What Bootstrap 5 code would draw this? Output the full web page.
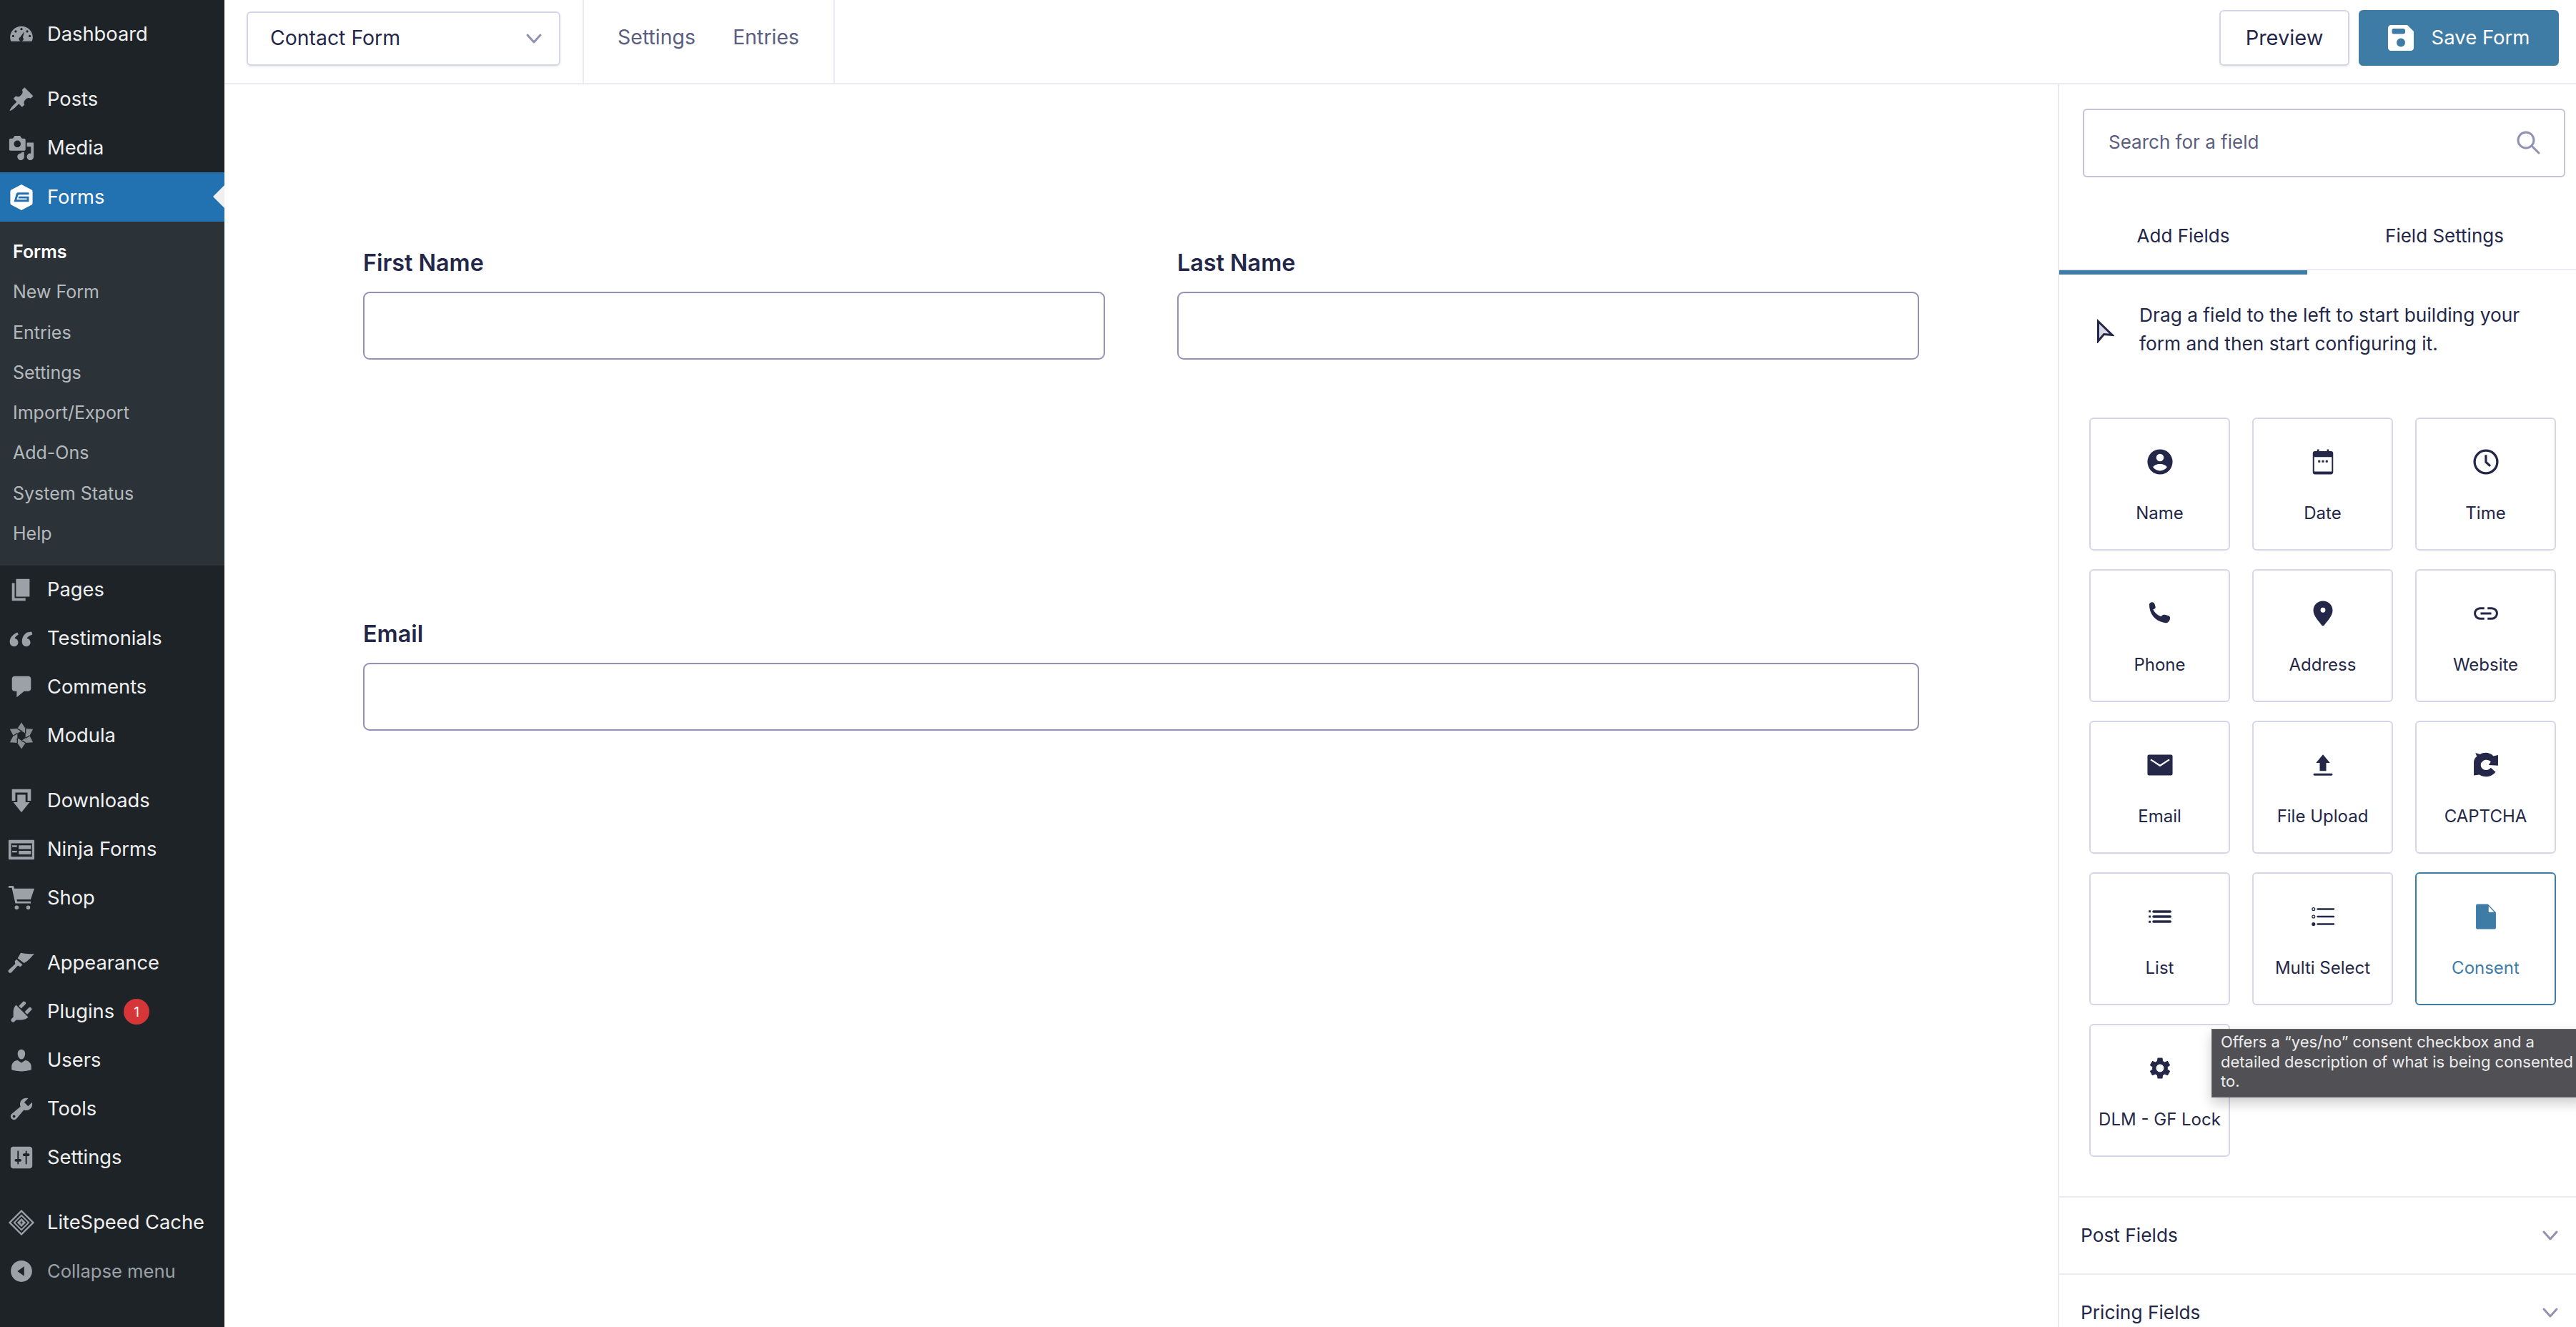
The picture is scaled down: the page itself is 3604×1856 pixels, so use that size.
<!DOCTYPE html>
<html lang="en">
<head>
<meta charset="utf-8">
<title>Contact Form</title>
<link href="https://cdn.jsdelivr.net/npm/bootstrap@5.3.0/dist/css/bootstrap.min.css" rel="stylesheet">
<style>
html,body{height:100%;margin:0;overflow:hidden;background:#fff;font-family:Inter,"Liberation Sans",sans-serif;color:#242748}
.app{height:1856px;width:3604px;position:relative}
.side{width:314px;flex:0 0 314px;background:#1d2327;padding-top:14px;height:100%}
.mitem{height:68px;color:#f0f0f1;font-size:27.3px;line-height:1;text-decoration:none;position:relative}
.mitem:hover{color:#f0f0f1}
.mico{width:60px;flex:0 0 60px;margin-right:6px;display:flex;justify-content:center}
.mico svg{width:38px;height:38px;fill:#9ca1a7}
.gapt{margin-top:23px}
.mitem.on{background:#2271b1;color:#fff;height:69px}
.mitem.on svg{fill:#fff}
.mitem.on::after{content:"";position:absolute;right:0;top:18px;border:16px solid transparent;border-right-color:#f0f0f1;border-left-width:0}
.sub{background:#2c3338;padding:14px 0 16px;height:481px}
.sitem{display:block;height:56.3px;line-height:56px;padding-left:18px;font-size:25px;color:#b4b9be;text-decoration:none}
.sitem.cur{color:#fff;font-weight:600}
.pill{width:36px;height:36px;background:#d63638;color:#fff;border-radius:50%;font-size:19px;display:flex;align-items:center;justify-content:center;margin-left:13px}
.dim{color:#9ca1a7;font-size:25.6px}
.dim svg{fill:#9ca1a7}
.sepz{stroke:#1d2327;stroke-width:.7}
.mainc{min-width:0;height:100%}
.topb{height:118px;flex:0 0 118px;border-bottom:2px solid #ebebf5;padding-top:14px}
.selbox{width:439px;height:76px;margin:2px 31px 0;border:2px solid #d5d7e9;border-radius:6px;padding:0 23px 1px 31px;font-size:28.4px;box-shadow:0 2px 3px rgba(36,39,72,.08)}
.chev{width:24px;height:16px;fill:none;stroke:#9092b2;stroke-width:3;stroke-linecap:round;stroke-linejoin:round}
.tlinks{width:353px;border-left:2px solid #ebebf5;border-right:2px solid #ebebf5;height:116px;margin-top:-14px;padding:0 0 11px 47px;gap:52px}
.tlink{font-size:28.5px;color:#5b5e80;text-decoration:none}
.btnp,.btns{height:78px;border-radius:6px;padding:0;display:flex;align-items:center;justify-content:center}
.btnp{width:182px;font-size:29px;background:#fff;border:2px solid #d5d7e9;color:#242748;box-shadow:0 2px 3px rgba(36,39,72,.08)}
.btns{width:280px;font-size:27.5px;background:#3e7ca6;border:0;color:#fff;gap:25px;margin:0 24px 0 13px}
.btns svg{width:36px;height:36px;fill:#fff}
.workz{min-height:0}
.canvasz{padding:230px 194px 0;min-width:0}
.lbl{font-size:32.3px;font-weight:600;line-height:40px;margin-bottom:20px;color:#242748}
.inp.form-control{height:95px;border:2px solid #9392b4;border-radius:9px;background:#fff;box-shadow:inset 0 1px 2px rgba(36,39,72,.04)}
.frow{gap:101px;margin-bottom:364px}
.frow>div{flex:1 1 0}
.panel{width:725px;flex:0 0 725px;border-left:2px solid #ebebf5;position:relative;overflow:hidden}
.srch{height:96px;margin:34px 15px 0 33px;border:2px solid #c2c3da;border-radius:6px;padding:0 32px 3px 34px;font-size:26px;color:#5b5e80}
.srch svg{width:36px;height:36px;fill:none;stroke:#9092b2;stroke-width:3;stroke-linecap:round}
.ftabs{margin-top:38px;height:92px;border-bottom:2px solid #ebebf5}
.ftab{height:92px;font-size:26px;color:#242748;line-height:88px;text-align:center;text-decoration:none}
.ftab:hover{color:#242748}
.ftab.a{flex:0 0 347px;box-shadow:0 6px 0 #3e7ca6}
.ftab.b{flex:1 1 0;padding-left:8px}
.hintz{padding:43px 0 0 53px;height:123px;font-size:26.3px;line-height:40px}
.hintz svg{flex:0 0 24px;width:24px;height:34px;margin-right:35px;margin-top:25px;fill:#d8d8e4;stroke:#242748;stroke-width:3}
.fgrid{display:grid;grid-template-columns:repeat(3,197px);column-gap:31px;row-gap:26px;margin:83px 0 0 42px}
.fcard{height:186px;border:2px solid #d5d7e9;border-radius:6px;font-size:24px;background:#fff;color:#242748;text-align:center;padding-top:42px}
.fcard svg{display:block;width:36px;height:36px;margin:0 auto 37px;fill:#242748}
.fcard span{display:block;line-height:34px;white-space:nowrap}
.fcard.sel{border-color:#3e7ca6;color:#3e7ca6}
.fcard.sel svg{fill:#3e7ca6}
.accs{border-top:2px solid #ebebf5;height:108px;padding:0 24px 0 30px;font-size:26.3px;color:#242748}
.acc1{margin-top:55px}
.tip{position:absolute;left:213px;top:1321px;width:520px;height:96px;background:#505055;color:#ececec;font-size:22px;line-height:27.5px;padding:4px 12px;white-space:nowrap;border:1px solid #666;box-shadow:0 8px 16px rgba(0,0,0,.2);z-index:5}
.fade{position:absolute;left:314px;right:0;bottom:0;height:57px;background:linear-gradient(rgba(236,236,236,0),rgba(236,236,236,1));pointer-events:none;z-index:6}
</style>
</head>
<body>
<div class="app d-flex">
<nav class="side">
<a class="mitem d-flex align-items-center" href="#"><span class="mico"><svg viewBox="0 0 20 20"><path transform="translate(1.500 1.500) scale(.85)" fill-rule="evenodd" d="M10 3C4.500 3 .2 7.200.2 12.500c0 1.300.3 2.600.7 3.500h18.200c.4-.9.7-2.200.7-3.500C19.800 7.200 15.500 3 10 3zM10 4.500a1 1 0 110 2 1 1 0 010-2zM5 6.500a1 1 0 110 2 1 1 0 010-2zM15 6.500a1 1 0 110 2 1 1 0 010-2zM2.800 10.500a1 1 0 110 2 1 1 0 010-2zM17.200 10.500a1 1 0 110 2 1 1 0 010-2zM12.500 7.500l-1.300 5.300a1.900 1.900 0 11-2.300-.4z"/></svg></span>Dashboard</a>
<a class="mitem d-flex align-items-center gapt" href="#"><span class="mico"><svg viewBox="0 0 20 20"><path d="M10.440 3.020l1.820-1.820 6.360 6.350-1.830 1.820c-1.050-.68-2.480-.57-3.410.36l-.75.75c-.92.93-1.040 2.350-.35 3.410l-1.830 1.820-2.410-2.410-2.800 2.790c-.42.42-3.380 2.710-3.800 2.290s1.860-3.390 2.280-3.810l2.790-2.790L4.100 9.360l1.830-1.820c1.050.69 2.480.57 3.400-.36l.75-.75c.93-.92 1.050-2.350.36-3.410z"/></svg></span>Posts</a>
<a class="mitem d-flex align-items-center" href="#"><span class="mico"><svg viewBox="0 0 20 20"><path d="M13 11V4c0-.55-.45-1-1-1h-1.670L9 1H5L3.670 3H2c-.55 0-1 .45-1 1v7c0 .55.45 1 1 1h10c.55 0 1-.45 1-1zM7 4.500c1.380 0 2.500 1.120 2.500 2.500S8.380 9.500 7 9.500 4.500 8.380 4.500 7 5.620 4.500 7 4.500zM14 6h5v10.500c0 1.380-1.120 2.500-2.500 2.500S14 17.880 14 16.500s1.120-2.500 2.500-2.500c.17 0 .34.02.5.05V9h-3V6zm-4 8.050V13h2v3.500c0 1.380-1.120 2.500-2.500 2.500S7 17.880 7 16.500 8.120 14 9.500 14c.17 0 .34.02.5.05z"/></svg></span>Media</a>
<a class="mitem on d-flex align-items-center" href="#"><span class="mico"><svg viewBox="0 0 20 20"><path fill-rule="evenodd" d="M10 .5L17.500 4.500Q18.200 5 18.200 5.800V14.200Q18.200 15 17.500 15.500L10 19.500 2.500 15.500Q1.800 15 1.800 14.200V5.800Q1.800 5 2.500 4.500zM7.500 6.500H15.500V8H8.500C8 8 7.700 8.200 7.500 8.600L6.500 11.700H14V10.800H7.700L8 9.300H15.500V13.300H4.500L6 8C6.300 7 6.800 6.500 7.500 6.500z"/></svg></span>Forms</a>
<div class="sub">
<a class="sitem cur" href="#">Forms</a>
<a class="sitem" href="#">New Form</a>
<a class="sitem" href="#">Entries</a>
<a class="sitem" href="#">Settings</a>
<a class="sitem" href="#">Import/Export</a>
<a class="sitem" href="#">Add-Ons</a>
<a class="sitem" href="#">System Status</a>
<a class="sitem" href="#">Help</a>
</div>
<a class="mitem d-flex align-items-center" href="#"><span class="mico"><svg viewBox="0 0 20 20"><path d="M6 15V2h10v13H6zm-1 1h8v2H3V5h2v11z"/></svg></span>Pages</a>
<a class="mitem d-flex align-items-center" href="#"><span class="mico"><svg viewBox="0 0 20 20"><path d="M5.200 6.500C3 7.800 1.400 9.900 1.400 12.500c0 1.900 1.300 3.400 3.200 3.400 1.700 0 3-1.300 3-3 0-1.500-1-2.700-2.500-2.900.2-1 1.100-2 2.700-2.900L7 5.500zM14.200 5.500C12 6.800 10.400 8.900 10.400 12.500c0 1.900 1.300 3.400 3.200 3.400 1.700 0 3-1.300 3-3 0-1.500-1-2.700-2.500-2.900.2-1 1.400-2 4-2.900L17.500 5z"/></svg></span>Testimonials</a>
<a class="mitem d-flex align-items-center" href="#"><span class="mico"><svg viewBox="0 0 20 20"><path d="M5 2h10c1.100 0 2 .9 2 2v7c0 1.100-.9 2-2 2h-3l-5.500 4.500V13H5c-1.100 0-2-.9-2-2V4c0-1.100.9-2 2-2z"/></svg></span>Comments</a>
<a class="mitem d-flex align-items-center" href="#"><span class="mico"><svg viewBox="0 0 20 20"><path opacity=".85" fill-rule="evenodd" d="M10 .2L13 4.800 18.500 5.100 16 10 18.500 14.900 13 15.200 10 19.800 7 15.200 1.500 14.900 4 10 1.500 5.100 7 4.800zM10 6.500L7 8.250V11.750L10 13.500 13 11.750V8.250z"/><path class="sepz" d="M13 4.800V8.250M16 10L13 11.750M13 15.200L10 13.500M7 15.200V11.750M4 10L7 8.250M7 4.800L10 6.500"/></svg></span>Modula</a>
<a class="mitem d-flex align-items-center gapt" href="#"><span class="mico"><svg viewBox="0 0 20 20"><path d="M3 1.500h14v8.500h-2.500V4H5.500v6H3zM7 5.500h6V11h3l-6 7.500L4 11h3z"/></svg></span>Downloads</a>
<a class="mitem d-flex align-items-center" href="#"><span class="mico"><svg viewBox="0 0 20 20"><path fill-rule="evenodd" d="M1 3h18c.3 0 .500.2.500.5v13.500c0 .3-.2.500-.5.500H1c-.3 0-.5-.2-.5-.5V3.500c0-.3.2-.5.5-.5zM2.400 5.500v9.900h15.400V5.500zM3.200 7h3.500v1.300H3.200zM8 7h9v2.700H8zM3.200 11h3.500v1.300H3.200zM8 11h9v2.700H8z"/></svg></span>Ninja Forms</a>
<a class="mitem d-flex align-items-center" href="#"><span class="mico"><svg viewBox="0 0 20 20"><path d="M.5 1h3.600l.8 2H19.500l-2.700 8H6.500l.4 1.500h10v1.500H5.500L2.900 2.500H.5zM6.500 15.500a1.500 1.500 0 110 3 1.500 1.500 0 010-3zM15 15.500a1.500 1.500 0 110 3 1.500 1.500 0 010-3z"/></svg></span>Shop</a>
<a class="mitem d-flex align-items-center gapt" href="#"><span class="mico"><svg viewBox="0 0 20 20"><path d="M9.500 2.500c2.500.6 6 1 10 .6-1.500 1.300-2.500 3-4.700 4.900-1 .9-2.200 1.500-3 2L7.200 6.500zM6.300 7.300l4.500 3.900-1.600 1.500-1.900-.8-4.600 4.900c-.6.6-1.600.6-2.100.1-.5-.6-.4-1.500.2-2l4.600-4.200-.3-2z"/></svg></span>Appearance</a>
<a class="mitem d-flex align-items-center" href="#"><span class="mico"><svg viewBox="0 0 20 20"><path d="M13.110 4.360L9.870 7.600 8 5.730l3.240-3.240c.35-.34 1.050-.2 1.560.32.52.51.66 1.210.31 1.550zm-8 1.770l.91-1.120 9.010 9.010-1.190.84c-.71.71-2.630 1.160-3.820 1.160H6.140L4.900 17.260c-.59.59-1.540.59-2.120 0-.59-.58-.59-1.530 0-2.120l1.240-1.240v-3.880c0-1.130.4-3.130 1.090-3.890zm7.260 3.970l3.240-3.240c.34-.35 1.040-.21 1.550.31.52.51.66 1.210.31 1.550l-3.240 3.250z"/></svg></span>Plugins<span class="pill">1</span></a>
<a class="mitem d-flex align-items-center" href="#"><span class="mico"><svg viewBox="0 0 20 20"><path d="M10 9.250c-2.270 0-2.730-3.440-2.730-3.440C7 4.020 7.820 2 9.970 2c2.160 0 2.980 2.020 2.710 3.810 0 0-.41 3.440-2.680 3.440zm0 2.570L12.720 10c2.390 0 4.520 2.330 4.520 4.530v2.490s-3.650 1.130-7.240 1.130c-3.650 0-7.240-1.130-7.240-1.130v-2.490c0-2.250 1.940-4.480 4.470-4.480z"/></svg></span>Users</a>
<a class="mitem d-flex align-items-center" href="#"><span class="mico"><svg viewBox="0 0 20 20"><path d="M16.680 9.770c-1.340 1.340-3.300 1.670-4.950.99l-5.410 6.520c-.99.99-2.590.99-3.570 0-.99-.98-.99-2.580 0-3.570l6.520-5.420c-.68-1.650-.35-3.610.99-4.950 1.280-1.280 3.120-1.620 4.720-1.060l-2.890 2.890 2.820 2.820 2.860-2.870c.53 1.580.18 3.420-1.090 4.670zM3.810 16.210c.4.39 1.040.39 1.430 0 .4-.4.4-1.040 0-1.430-.39-.4-1.030-.4-1.430 0-.39.39-.39 1.030 0 1.430z"/></svg></span>Tools</a>
<a class="mitem d-flex align-items-center" href="#"><span class="mico"><svg viewBox="0 0 20 20"><path fill-rule="evenodd" d="M18 16V4c0-1.100-.9-2-2-2H4c-1.100 0-2 .9-2 2v12c0 1.100.9 2 2 2h12c1.100 0 2-.9 2-2zM8 11h1c.55 0 1 .45 1 1s-.45 1-1 1H8v1.500c0 .28-.22.5-.5.5s-.5-.22-.5-.5V13H6c-.55 0-1-.45-1-1s.45-1 1-1h1V5.500c0-.28.22-.5.5-.5s.5.22.5.5V11zm5-2h-1c-.55 0-1-.45-1-1s.45-1 1-1h1V5.500c0-.28.22-.5.5-.5s.5.22.5.5V7h1c.55 0 1 .45 1 1s-.45 1-1 1h-1v5.500c0 .28-.22.5-.5.5s-.5-.22-.5-.5V9z"/></svg></span>Settings</a>
<a class="mitem d-flex align-items-center gapt" href="#"><span class="mico"><svg viewBox="0 0 20 20"><path fill-rule="evenodd" d="M10 .5L19.500 10 10 19.500.5 10zM10 2.200L2.200 10l7.800 7.800 7.800-7.800zM10 4L16 10l-6 6-6-6zM10 5.400L5.400 10l4.600 4.600 4.600-4.600zM10 6.800l3.200 3.200-3.200 3.200L6.800 10zM10.600 8L8.800 10.200h1.100L9.300 12l1.900-2.200h-1.100z"/></svg></span>LiteSpeed Cache</a>
<a class="mitem d-flex align-items-center dim" href="#"><span class="mico"><svg viewBox="0 0 20 20"><path fill-rule="evenodd" d="M10 2.160c4.330 0 7.840 3.510 7.840 7.840S14.330 17.840 10 17.840 2.160 14.330 2.160 10 5.670 2.160 10 2.160zm2 11.340V6.500L7 10z"/></svg></span>Collapse menu</a>
</nav>
<div class="mainc flex-grow-1 d-flex flex-column">
<header class="topb d-flex align-items-start">
<div class="selbox d-flex align-items-center justify-content-between"><span>Contact Form</span><svg class="chev" viewBox="0 0 24 16"><path d="M3 3l9 10 9-10"/></svg></div>
<div class="tlinks d-flex align-items-center"><a class="tlink" href="#">Settings</a><a class="tlink" href="#">Entries</a></div>
<div class="ms-auto d-flex align-items-center">
<button class="btn btnp" type="button">Preview</button>
<button class="btn btns" type="button"><svg viewBox="0 0 36 36"><path fill-rule="evenodd" d="M4 0h23l9 9v23c0 2-2 4-4 4H4c-2 0-4-2-4-4V4c0-2 2-4 4-4zM8 5c-2 0-2.500 1-2.500 2.500V10c0 1.500.5 2.500 2.500 2.500h13c2 0 3-1 3-2.500V7.500C24 6 23 5 21 5zM18 18.500a6 6 0 100 12 6 6 0 000-12z"/></svg>Save Form</button>
</div>
</header>
<div class="workz flex-grow-1 d-flex">
<main class="canvasz flex-grow-1">
<div class="frow d-flex">
<div><div class="lbl">First Name</div><input class="form-control inp" type="text" aria-label="First Name"></div>
<div><div class="lbl">Last Name</div><input class="form-control inp" type="text" aria-label="Last Name"></div>
</div>
<div class="lbl">Email</div><input class="form-control inp" type="text" aria-label="Email">
</main>
<aside class="panel">
<div class="srch d-flex align-items-center justify-content-between"><span>Search for a field</span><svg viewBox="0 0 36 36"><circle cx="15" cy="15" r="11"/><path d="M23 23l10 10"/></svg></div>
<div class="ftabs d-flex"><a class="ftab a" href="#">Add Fields</a><a class="ftab b" href="#">Field Settings</a></div>
<div class="hintz d-flex"><svg viewBox="0 0 24 34"><path d="M1.500 3.500L21 22.500 9.500 21.500 1.500 31z"/></svg><div>Drag a field to the left to start building your<br>form and then start configuring it.</div></div>
<div class="fgrid">
<div class="fcard"><svg viewBox="0 0 24 24"><path fill-rule="evenodd" d="M12 .3a11.700 11.700 0 110 23.400A11.700 11.700 0 0112 .3zM12 4.500a3.500 3.500 0 100 7 3.500 3.500 0 000-7zM12 14c-3 0-6 1.200-6.500 3 1.500 2 3.800 3.300 6.500 3.300s5-1.300 6.500-3.300c-.5-1.800-3.500-3-6.500-3z"/></svg><span>Name</span></div>
<div class="fcard"><svg viewBox="0 0 24 24"><path fill-rule="evenodd" d="M6.500.4h1.800V2h7.400V.4h1.800V2h2c1.300 0 2 .8 2 2v17.500c0 1.300-.7 2.100-2 2.100h-15c-1.300 0-2-.8-2-2.100V4c0-1.200.7-2 2-2h2zM3.800 7.500v13.500h16.400V7.500zM7.500 10.500h2v2h-2zM11 10.500h2v2h-2zM14.500 10.500h2v2h-2z"/></svg><span>Date</span></div>
<div class="fcard"><svg viewBox="0 0 24 24"><path fill-rule="evenodd" d="M12 .3a11.700 11.700 0 110 23.400A11.700 11.700 0 0112 .3zM12 2.500a9.500 9.500 0 100 19 9.500 9.500 0 000-19zM10.900 5.500H13v6.100l3.800 3.500-1.500 1.600-4.400-4.100z"/></svg><span>Time</span></div>
<div class="fcard"><svg viewBox="0 0 24 24"><path transform="translate(-1.700 1.500) scale(1.050 .875)" d="M3.500 2.500C3.500 1 4.800 0 6 0s2 .7 2.300 2l.7 2.700c.2 1-.1 1.800-.8 2.300l-1.300.8c1.300 3.300 3.700 6 7 7.500l1-1.200c.7-.7 1.500-1 2.400-.7l2.900.9c1.200.4 1.800 1.300 1.800 2.500 0 1.900-1 4.700-3 5.200-.9.200-1.800.1-2.600-.2C8.800 20 3.500 12.500 3.500 2.500z"/></svg><span>Phone</span></div>
<div class="fcard"><svg viewBox="0 0 24 24"><path fill-rule="evenodd" d="M12 .4c5 0 9 3.800 9 8.700 0 5.300-5.500 10.500-8 14-.5.600-1.500.600-2 0-2.500-3.500-8-8.700-8-14C3 4.200 7 .4 12 .4zM12 6.500a2.300 2.300 0 100 4.600 2.300 2.300 0 000-4.600z"/></svg><span>Address</span></div>
<div class="fcard"><svg viewBox="0 0 24 24"><path d="M10.500 6.200H6.500a5.800 5.800 0 000 11.600h4v-2H6.500a3.800 3.800 0 010-7.600h4zM13.500 6.200v2h4a3.800 3.800 0 010 7.600h-4v2h4a5.800 5.800 0 000-11.600zM7 11h10v2H7z"/></svg><span>Website</span></div>
<div class="fcard"><svg viewBox="0 0 24 24"><path fill-rule="evenodd" d="M1.800 2.300h20.400c.9 0 1.500.6 1.500 1.500v16.400c0 .9-.6 1.500-1.500 1.500H1.800c-.9 0-1.500-.6-1.500-1.500V3.800c0-.9.6-1.500 1.500-1.500zM3.700 6.300L2.900 7.500 12 13.500l9.100-6-.8-1.200L12 11.600z"/></svg><span>Email</span></div>
<div class="fcard"><svg viewBox="0 0 24 24"><path d="M12 2.200l6.500 7.800H15v7.500H9V10H5.500zM4 19.800h16c.5 0 1 .5 1 1s-.5 1-1 1H4c-.5 0-1-.5-1-1s.5-1 1-1z"/></svg><span>File Upload</span></div>
<div class="fcard"><svg viewBox="0 0 24 24"><path d="M2.200.7L6.500 2C10-.2 15.500-.2 19 3.700L23.300 2.700V12.500L14.500 12 16.500 9C15 7 11 6.500 9 8.500L7.500 10C6.500 13 8 16 11 16.500 13.500 17 15.500 16 16.500 14.500L21 18.500C17 23.500 10 24 6 21L.7 21.600V9C1 6.500 2 5 3.500 4z"/></svg><span>CAPTCHA</span></div>
<div class="fcard"><svg viewBox="0 0 24 24"><path d="M1.500 6.200h1.800v2H1.500zM6 6.100h15.500a1.200 1.200 0 010 2.400H6a1.200 1.200 0 010-2.400zM1.500 11h1.800v2H1.500zM6 10.800h15.500a1.200 1.200 0 010 2.400H6a1.200 1.200 0 010-2.400zM1.500 15.800h1.800v2H1.500zM6 15.500h15.500a1.200 1.200 0 010 2.400H6a1.200 1.200 0 010-2.400z"/></svg><span>List</span></div>
<div class="fcard"><svg viewBox="0 0 24 24"><path fill-rule="evenodd" d="M3.200 3.300a1.700 1.700 0 110 3.400 1.700 1.700 0 010-3.400zm0 .8a.9.9 0 100 1.800.9.9 0 000-1.800zM3.200 10.300a1.700 1.700 0 110 3.400 1.700 1.700 0 010-3.400zm0 .8a.9.9 0 100 1.800.9.9 0 000-1.800zM3.200 17.300a1.700 1.700 0 110 3.400 1.700 1.700 0 010-3.400zM7 4.200h15a.8.8 0 010 1.600H7a.8.8 0 010-1.600zM7 11.200h15a.8.8 0 010 1.600H7a.8.8 0 010-1.600zM7 18.200h15a.8.8 0 010 1.600H7a.8.8 0 010-1.600z"/></svg><span>Multi Select</span></div>
<div class="fcard sel"><svg viewBox="0 0 24 24"><path fill-rule="evenodd" d="M4.200.3h9.600l7.500 7.800v14c0 1-.6 1.600-1.600 1.600H4.200c-1 0-1.500-.6-1.500-1.600V1.900c0-1 .5-1.600 1.500-1.600zM14.500 2.300V7.800h5.200z"/></svg><span>Consent</span></div>
<div class="fcard"><svg viewBox="0 0 24 24"><path fill-rule="evenodd" d="M19.140 12.940c.04-.3.06-.61.06-.94 0-.32-.02-.64-.07-.94l2.030-1.580c.18-.14.23-.41.12-.61l-1.920-3.320c-.12-.22-.37-.29-.59-.22l-2.390.96c-.5-.38-1.030-.7-1.620-.94l-.36-2.540c-.04-.24-.24-.41-.48-.41h-3.840c-.24 0-.43.17-.47.41l-.36 2.540c-.59.24-1.130.57-1.620.94l-2.390-.96c-.22-.08-.47 0-.59.22L2.740 8.870c-.12.21-.08.47.12.61l2.030 1.580c-.05.3-.09.63-.09.94s.02.64.07.94l-2.030 1.580c-.18.14-.23.41-.12.61l1.920 3.320c.12.22.37.29.59.22l2.390-.96c.5.38 1.030.7 1.620.94l.36 2.540c.05.24.24.41.48.41h3.840c.24 0 .44-.17.47-.41l.36-2.540c.59-.24 1.130-.56 1.620-.94l2.390.96c.22.08.47 0 .59-.22l1.920-3.320c.12-.22.07-.47-.12-.61l-2.010-1.580zM12 15.600c-1.980 0-3.600-1.620-3.600-3.600s1.620-3.600 3.600-3.600 3.600 1.620 3.600 3.600-1.620 3.600-3.600 3.600z"/></svg><span>DLM - GF Lock</span></div>
</div>
<div class="accs acc1 d-flex align-items-center justify-content-between"><span>Post Fields</span><svg class="chev" viewBox="0 0 24 16"><path d="M3 3l9 10 9-10"/></svg></div>
<div class="accs d-flex align-items-center justify-content-between"><span>Pricing Fields</span><svg class="chev" viewBox="0 0 24 16"><path d="M3 3l9 10 9-10"/></svg></div>
<div class="tip">Offers a “yes/no” consent checkbox and a<br>detailed description of what is being consented<br>to.</div>
</aside>
</div>
</div>
<div class="fade"></div>
</div>
<script src="https://cdn.jsdelivr.net/npm/bootstrap@5.3.0/dist/js/bootstrap.bundle.min.js"></script>
</body>
</html>
